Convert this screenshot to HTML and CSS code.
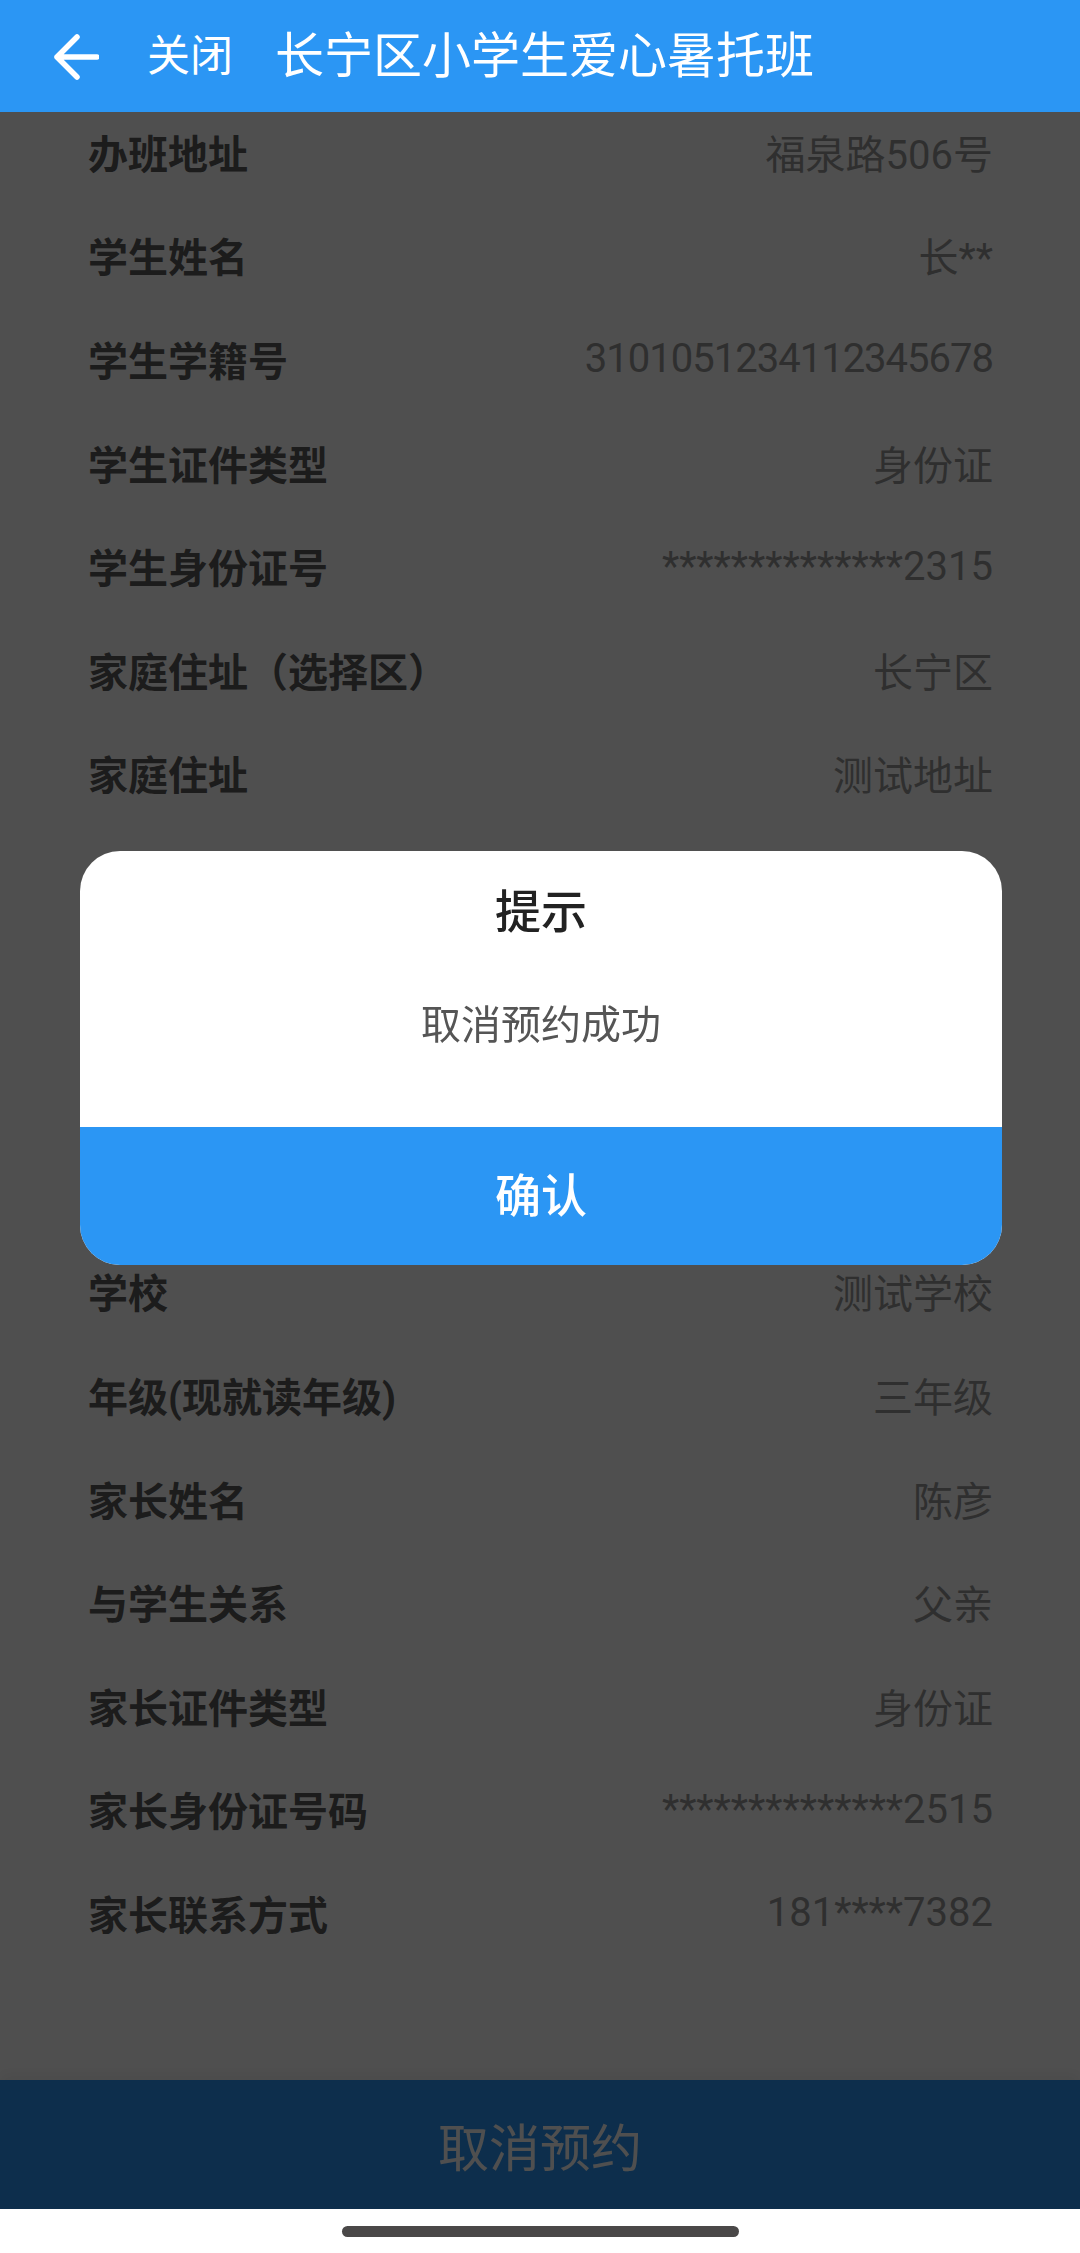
FILE: index.html
```html
<!DOCTYPE html>
<html lang="zh-CN">
<head>
    <meta charset="UTF-8">
    <meta name="viewport" content="width=device-width, initial-scale=1.0">
    <title>长宁区小学生爱心暑托班</title>
    <link rel="stylesheet" href="styles.css">
</head>
<body>

<div class="page">
    <div class="topbar">
        <svg class="back" width="46" height="46" viewBox="0 0 46 46">
            <path d="M4 23 H44 M24 3 L4 23 L24 43" fill="none" stroke="#fff" stroke-width="5.5" stroke-linecap="round" stroke-linejoin="round"/>
        </svg>
        <span class="close">关闭</span>
        <span class="title">长宁区小学生爱心暑托班</span>
    </div>

    <div class="content">
        <div class="list">
            <div class="row"><span class="label">办班地址</span><span class="value">福泉路506号</span></div>
            <div class="row"><span class="label">学生姓名</span><span class="value">长**</span></div>
            <div class="row"><span class="label">学生学籍号</span><span class="value num">3101051234112345678</span></div>
            <div class="row"><span class="label">学生证件类型</span><span class="value">身份证</span></div>
            <div class="row"><span class="label">学生身份证号</span><span class="value">**************2315</span></div>
            <div class="row"><span class="label">家庭住址（选择区）</span><span class="value">长宁区</span></div>
            <div class="row"><span class="label">家庭住址</span><span class="value">测试地址</span></div>
            <div class="row"><span class="label">所在街道</span><span class="value">新华路街道</span></div>
            <div class="row"><span class="label">学生性别</span><span class="value">男</span></div>
            <div class="row"><span class="label">出生日期</span><span class="value">2015-06-01</span></div>
            <div class="row"><span class="label">学校所在区</span><span class="value">长宁区</span></div>
            <div class="row"><span class="label">学校</span><span class="value">测试学校</span></div>
            <div class="row"><span class="label">年级(现就读年级)</span><span class="value">三年级</span></div>
            <div class="row"><span class="label">家长姓名</span><span class="value">陈彦</span></div>
            <div class="row"><span class="label">与学生关系</span><span class="value">父亲</span></div>
            <div class="row"><span class="label">家长证件类型</span><span class="value">身份证</span></div>
            <div class="row"><span class="label">家长身份证号码</span><span class="value">**************2515</span></div>
            <div class="row"><span class="label">家长联系方式</span><span class="value">181****7382</span></div>
        </div>
    </div>

    <div class="footer">
        <button class="cancel-btn">取消预约</button>
    </div>

    <div class="navbar"><div class="home-bar"></div></div>
</div>

<div class="mask"></div>

<div class="dialog">
    <div class="dialog-body">
        <div class="dialog-title">提示</div>
        <div class="dialog-msg">取消预约成功</div>
    </div>
    <button class="dialog-btn">确认</button>
</div>

</body>
</html>
```

FILE: styles.css
```css
body {
    margin: 0;
    padding: 0;
    width: 1080px;
    height: 2253px;
    overflow: hidden;
    background: #fff;
    font-family: Roboto, "Noto Sans CJK SC", sans-serif;
}
.page {
    display: flex;
    flex-direction: column;
    height: 2253px;
}
.topbar {
    position: relative;
    z-index: 20;
    flex: none;
    height: 112px;
    background: #2b96f4;
    color: #fff;
    display: flex;
    align-items: center;
    padding-left: 53px;
}
.back {
    flex: none;
    margin-top: 2px;
}
.close {
    font-size: 43px;
    margin-left: 48px;
    line-height: 1;
}
.title {
    font-size: 49px;
    margin-left: 42px;
    line-height: 1;
}
.content {
    flex: 1;
    overflow: hidden;
}
.list {
    margin-top: -12px;
    padding: 0 87px 0 88px;
}
.row {
    height: 103.6px;
    display: flex;
    justify-content: space-between;
    align-items: center;
    font-size: 40px;
}
.label {
    color: #5a5a5a;
    font-weight: 700;
}
.value {
    color: #999;
}
.value.num {
    letter-spacing: -1px;
}
.footer {
    flex: none;
    height: 129px;
    box-shadow: 0 -6px 14px rgba(0, 0, 0, 0.06);
}
.cancel-btn {
    width: 100%;
    height: 100%;
    border: none;
    background: #2b96f4;
    color: #fff;
    font-family: inherit;
    font-size: 51px;
    padding: 0;
}
.navbar {
    position: relative;
    z-index: 20;
    flex: none;
    height: 44px;
    background: #fff;
    display: flex;
    justify-content: center;
    padding-top: 17px;
    box-sizing: border-box;
}
.home-bar {
    width: 397px;
    height: 11px;
    border-radius: 6px;
    background: #4a4848;
}
.mask {
    position: fixed;
    inset: 0;
    z-index: 10;
    background: rgba(0, 0, 0, 0.69);
}
.dialog {
    position: fixed;
    z-index: 30;
    left: 80px;
    top: 851px;
    width: 922px;
    height: 414px;
    border-radius: 40px;
    overflow: hidden;
    background: #fff;
    display: flex;
    flex-direction: column;
}
.dialog-body {
    height: 276px;
    display: flex;
    flex-direction: column;
    align-items: center;
}
.dialog-title {
    margin-top: 38px;
    font-size: 46px;
    line-height: 1;
    font-weight: 500;
    color: #222;
}
.dialog-msg {
    margin-top: 71px;
    font-size: 40px;
    line-height: 1;
    color: #555;
}
.dialog-btn {
    flex: 1;
    border: none;
    padding: 0 0 8px;
    background: #2b96f4;
    color: #fff;
    font-family: inherit;
    font-size: 46px;
    font-weight: 500;
}
```
